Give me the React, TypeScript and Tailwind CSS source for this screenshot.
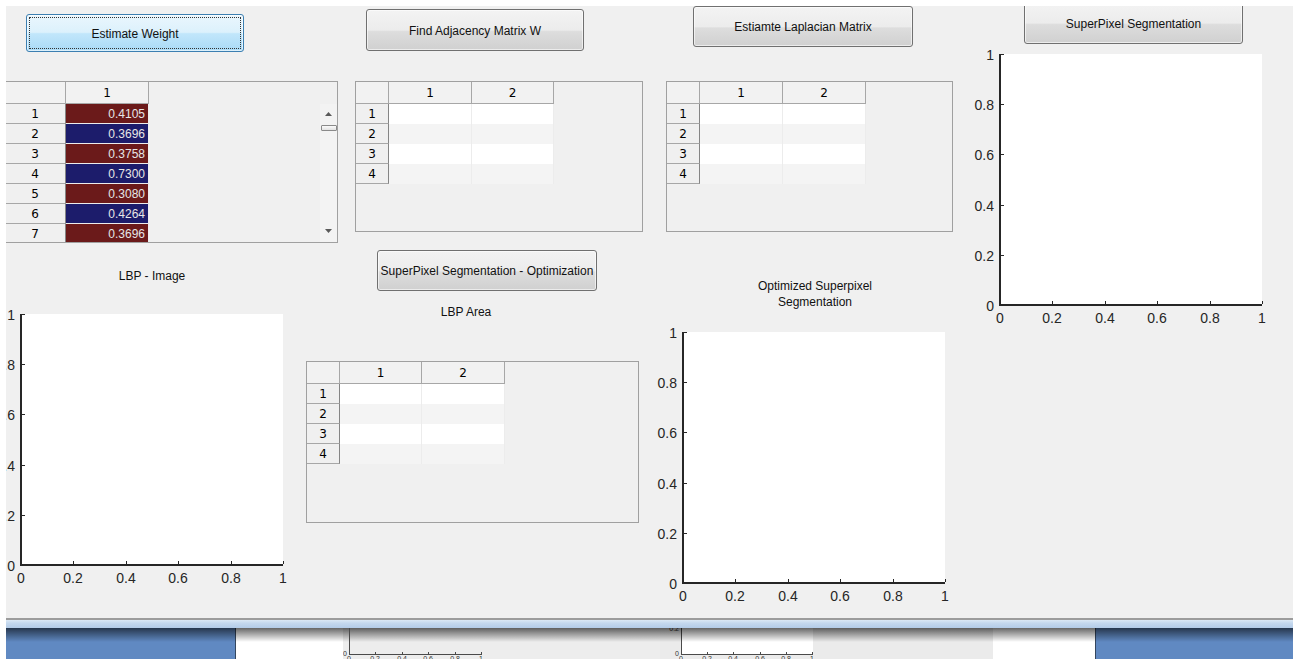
import React from 'react';
import clsx from 'clsx';

const uiFont = "font-['Liberation_Sans',Arial,sans-serif]";
const cellFont = "font-['DejaVu_Sans',Verdana,sans-serif]";

type ButtonProps = { label: string; className: string; focused?: boolean };

const PushButton = ({ label, className, focused = false }: ButtonProps) => (
  <button
    type="button"
    className={clsx(
      'relative shrink-0 flex items-center justify-center rounded-[3px] border text-[12px] text-[#111] shadow-[inset_0_0_0_1px_rgba(255,255,255,0.6)]',
      focused
        ? 'border-[#3c7fb1] bg-[linear-gradient(180deg,#eaf6fd_0%,#dcf1fc_48%,#c1e6fb_52%,#a9daf6_100%)]'
        : 'border-[#707070] bg-[linear-gradient(180deg,#f3f3f3_0%,#ececec_50%,#dddddd_54%,#d0d0d0_100%)]',
      className
    )}
  >
    {focused && <span className="absolute inset-[2px] border border-dotted border-[#333]" />}
    <span className="pt-[1px]">{label}</span>
  </button>
);

type Cell = { v: string; tone: 'red' | 'blue' };

type TableProps = {
  className: string;
  cornerW: string;
  cols: string[];
  rowCount: number;
  cells?: Cell[];
  scroll?: boolean;
};

const ScrollBar = () => (
  <div className="ml-auto w-[17px] shrink-0 flex flex-col items-center bg-[#f3f3f3]">
    <svg width={7} height={4} className="mt-[8px] block">
      <path d="M0 4 L3.5 0 L7 4 Z" fill="#5a5a5a" />
    </svg>
    <div className="mt-[9px] h-[6px] w-[16px] rounded-[1px] border border-[#8a8a8a] bg-[linear-gradient(180deg,#fbfbfb,#e2e2e2)]" />
    <svg width={7} height={4} className="mt-auto mb-[9px] block">
      <path d="M0 0 L7 0 L3.5 4 Z" fill="#5a5a5a" />
    </svg>
  </div>
);

const UiTable = ({ className, cornerW, cols, rowCount, cells, scroll = false }: TableProps) => (
  <div
    className={clsx(
      'shrink-0 flex flex-col overflow-hidden border border-[#a0a0a0] bg-[#f0f0f0]',
      className
    )}
  >
    <div className="flex h-[22px] shrink-0">
      <div className={clsx('shrink-0 border-r border-b border-[#a7a7a7] bg-[#f2f2f2]', cornerW)} />
      {cols.map((w, i) => (
        <div
          key={i}
          className={clsx(
            'shrink-0 flex items-center justify-center border-r border-b border-[#a7a7a7] bg-[#f2f2f2] text-[12px] text-black',
            cellFont,
            w
          )}
        >
          {i + 1}
        </div>
      ))}
    </div>
    <div className="flex flex-1 min-h-0">
      <div className="flex flex-col">
        {Array.from({ length: rowCount }, (_, r) => (
          <div key={r} className="flex h-[20px] shrink-0">
            <div
              className={clsx(
                'shrink-0 flex items-center justify-center border-r border-r-[#858585] border-b border-b-[#a7a7a7] text-[12px] text-black',
                cellFont,
                cornerW
              )}
            >
              {r + 1}
            </div>
            {cols.map((w, c) => {
              const cell = cells?.[r];
              if (cell) {
                return (
                  <div
                    key={c}
                    className={clsx(
                      'shrink-0 flex items-center justify-end pr-[3px] border-b border-r border-[#ececec] text-[12px] text-[#e6e6e6]',
                      cell.tone === 'red' ? 'bg-[#6b1a1a]' : 'bg-[#1c1c6b]',
                      w
                    )}
                  >
                    {cell.v}
                  </div>
                );
              }
              return (
                <div
                  key={c}
                  className={clsx(
                    'shrink-0 border-r border-[#ececec]',
                    r % 2 === 0 ? 'bg-white' : 'bg-[#f4f4f4]',
                    w
                  )}
                />
              );
            })}
          </div>
        ))}
      </div>
      {scroll && <ScrollBar />}
    </div>
  </div>
);

const TICKS = [0, 1, 2, 3, 4, 5];
const tickLabel = (i: number) => (i === 0 ? '0' : i === 5 ? '1' : `0.${i * 2}`);

// empty MATLAB-style axes: 262x251 plot box, labels outside
const PlotAxes = ({ className }: { className: string }) => {
  const L = 40;
  const T = 8;
  const W = 262;
  const H = 251;
  return (
    <svg
      width={310}
      height={283}
      className={clsx('block shrink-0', className)}
      fontFamily="'Liberation Sans', Arial, sans-serif"
      fontSize={14}
    >
      <rect x={L} y={T} width={W} height={H} fill="#fff" />
      {TICKS.map((i) => {
        const x = L + Math.round((W * i) / 5);
        const y = T + H - Math.round((H * i) / 5);
        return (
          <g key={i}>
            <rect x={x} y={T + H - 4} width={1} height={3} fill="#262626" />
            <rect x={L + 1} y={y} width={3} height={1} fill="#262626" />
            <text x={L - 6} y={y + 6} textAnchor="end" fill="#262626">
              {tickLabel(i)}
            </text>
            <text x={x} y={T + H + 18} textAnchor="middle" fill="#262626">
              {tickLabel(i)}
            </text>
          </g>
        );
      })}
      <rect x={L - 1} y={T} width={2} height={H + 1} fill="#262626" />
      <rect x={L - 1} y={T + H - 1} width={W + 1} height={2} fill="#262626" />
    </svg>
  );
};

// small axes peeking out of the window behind
const MiniAxesA = () => (
  <svg width={145} height={31} className="block relative z-10" fontFamily="'Liberation Sans', Arial, sans-serif" fontSize={7} fill="#333">
    <rect x={6} y={0} width={1} height={27} fill="#4a4a4a" />
    <rect x={6} y={26} width={133} height={1} fill="#4a4a4a" />
    <text x={4} y={28} textAnchor="end">0</text>
    {TICKS.map((i) => {
      const x = 6 + Math.round((132 * i) / 5);
      return (
        <g key={i}>
          <rect x={x} y={24} width={1} height={2} fill="#4a4a4a" />
          <text x={x} y={33} textAnchor="middle">
            {tickLabel(i)}
          </text>
        </g>
      );
    })}
  </svg>
);

const MiniAxesB = () => (
  <svg width={153} height={31} className="block" fontFamily="'Liberation Sans', Arial, sans-serif" fontSize={7} fill="#333">
    <rect x={22} y={0} width={131} height={26} fill="#fff" />
    <rect x={21} y={0} width={1} height={27} fill="#4a4a4a" />
    <rect x={21} y={26} width={132} height={1} fill="#4a4a4a" />
    <text x={19} y={3} textAnchor="end">0.2</text>
    <text x={19} y={28} textAnchor="end">0</text>
    {TICKS.map((i) => {
      const x = 21 + Math.round((131 * i) / 5);
      return (
        <g key={i}>
          <rect x={x} y={24} width={1} height={2} fill="#4a4a4a" />
          <text x={x} y={33} textAnchor="middle">
            {tickLabel(i)}
          </text>
        </g>
      );
    })}
  </svg>
);

const weights: Cell[] = [
  { v: '0.4105', tone: 'red' },
  { v: '0.3696', tone: 'blue' },
  { v: '0.3758', tone: 'red' },
  { v: '0.7300', tone: 'blue' },
  { v: '0.3080', tone: 'red' },
  { v: '0.4264', tone: 'blue' },
  { v: '0.3696', tone: 'red' },
];

export default function App() {
  return (
    <div className={clsx('w-[1293px] h-[659px] overflow-hidden bg-white pl-[6px] pt-[6px] flex flex-col', uiFont)}>
      {/* figure window */}
      <div className="w-[1287px] h-[612px] shrink-0 overflow-hidden bg-[#f0f0f0] flex text-[#111]">
        {/* weights + LBP image */}
        <div className="w-[294px] shrink-0 flex flex-col items-start">
          <PushButton focused label="Estimate Weight" className="ml-[20px] mt-[8px] w-[218px] h-[38px]" />
          <UiTable
            className="ml-[-2px] mt-[29px] w-[334px] h-[162px]"
            cornerW="w-[61px]"
            cols={['w-[83px]']}
            rowCount={7}
            cells={weights}
            scroll
          />
          <div className="ml-[15px] mt-[26px] w-[262px] text-center text-[12px] leading-[14px]">LBP - Image</div>
          <PlotAxes className="ml-[-25px] mt-[23px]" />
        </div>

        {/* adjacency + LBP area */}
        <div className="w-[360px] shrink-0 flex flex-col items-start">
          <PushButton label="Find Adjacency Matrix W" className="ml-[66px] mt-[3px] w-[218px] h-[42px]" />
          <UiTable
            className="ml-[55px] mt-[30px] w-[288px] h-[151px]"
            cornerW="w-[33px]"
            cols={['w-[83px]', 'w-[82px]']}
            rowCount={4}
          />
          <PushButton
            label="SuperPixel Segmentation - Optimization"
            className="ml-[77px] mt-[18px] w-[220px] h-[41px]"
          />
          <div className="ml-[66px] mt-[14px] w-[200px] text-center text-[12px] leading-[14px]">LBP Area</div>
          <UiTable
            className="ml-[6px] mt-[42px] w-[333px] h-[162px]"
            cornerW="w-[33px]"
            cols={['w-[82px]', 'w-[83px]']}
            rowCount={4}
          />
        </div>

        {/* laplacian + optimized result */}
        <div className="w-[300px] shrink-0 flex flex-col items-start">
          <PushButton label="Estiamte Laplacian Matrix" className="ml-[33px] mt-0 w-[220px] h-[41px]" />
          <UiTable
            className="ml-[6px] mt-[34px] w-[287px] h-[151px]"
            cornerW="w-[33px]"
            cols={['w-[83px]', 'w-[83px]']}
            rowCount={4}
          />
          <div className="ml-[55px] mt-[46px] w-[200px] text-center text-[12px] leading-[16px]">
            Optimized Superpixel
            <br />
            Segmentation
          </div>
          <PlotAxes className="ml-[-17px] mt-[14px]" />
        </div>

        {/* superpixel result */}
        <div className="flex-1 flex flex-col items-start">
          <PushButton label="SuperPixel Segmentation" className="ml-[64px] mt-[-4px] w-[219px] h-[42px]" />
          <PlotAxes className="ml-0 mt-[2px]" />
        </div>
      </div>

      <div className="h-[2px] shrink-0 bg-[#9c9c9c]" />
      <div className="h-[8px] shrink-0 bg-[linear-gradient(180deg,#dbe8f5_0%,#c4d8ee_40%,#b3cce8_100%)]" />

      {/* strip below the window */}
      <div className="relative flex h-[31px] shrink-0">
        <div className="w-[230px] shrink-0 border-r border-[#34465e] bg-[#6089c2]" />
        <div className="w-[107px] shrink-0 bg-white" />
        <div className="w-[317px] shrink-0 bg-[#ededed]">
          <MiniAxesA />
        </div>
        <div className="w-[153px] shrink-0 bg-[#ebebeb]">
          <MiniAxesB />
        </div>
        <div className="w-[180px] shrink-0 bg-[#ebebeb]" />
        <div className="w-[102px] shrink-0 bg-white" />
        <div className="flex-1 border-l border-[#34465e] bg-[#6089c2]" />
        <div className="pointer-events-none absolute inset-x-0 top-0 h-[14px] bg-gradient-to-b from-black/60 to-transparent" />
      </div>
    </div>
  );
}
